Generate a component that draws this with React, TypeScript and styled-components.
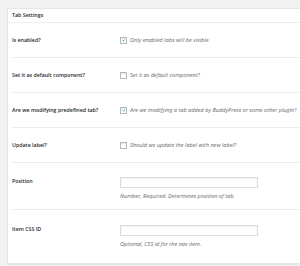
import styled, { createGlobalStyle } from "styled-components";

const GlobalStyle = createGlobalStyle`
  html, body {
    margin: 0;
    padding: 0;
    background: #f1f1f1;
    overflow: hidden;
    font-family: "Open Sans", "Liberation Sans", sans-serif;
  }
`;

const Page = styled.div`
  padding: 8px 0 0 7px;
  height: 266px;
  box-sizing: border-box;
`;

const Panel = styled.section`
  width: 320px;
  height: 256px;
  background: #fff;
  border: 1px solid #e5e5e5;
  border-right: none;
  box-sizing: border-box;
  box-shadow: 0 1px 1px rgba(0, 0, 0, 0.04);
`;

const PanelTitle = styled.h2`
  margin: 0;
  height: 14px;
  padding: 0 4px;
  border-bottom: 1px solid #eee;
  font-size: 5.3px;
  font-weight: 600;
  color: #23282d;
  line-height: 13px;
  box-sizing: border-box;
`;

const Rows = styled.div`
  padding: 0 4px;
`;

const Row = styled.div<{ $top?: number; $bottom?: number }>`
  display: grid;
  grid-template-columns: 108px 1fr;
  align-items: start;
  padding: ${(p) => p.$top ?? 13}px 0 ${(p) => p.$bottom ?? 13}px;
  border-bottom: 1px solid #eee;

  &:last-child {
    border-bottom: none;
  }
`;

const Label = styled.div`
  font-size: 5.3px;
  font-weight: 600;
  color: #23282d;
  line-height: 8px;
`;

const Field = styled.div`
  display: flex;
  flex-direction: column;
  gap: 5px;
`;

const CheckLine = styled.label`
  display: flex;
  align-items: center;
  gap: 3px;
  height: 8px;
`;

const Box = styled.span`
  width: 7px;
  height: 7px;
  border: 1px solid #b4b9be;
  background: #fff;
  box-sizing: border-box;
  display: flex;
  align-items: center;
  justify-content: center;
  box-shadow: inset 0 1px 1px rgba(0, 0, 0, 0.1);
`;

const Help = styled.span`
  font-size: 5.6px;
  font-style: italic;
  color: #666;
  line-height: 6px;
`;

const TextInput = styled.input`
  width: 138px;
  height: 11px;
  margin: 0;
  padding: 0;
  border: 1px solid #ddd;
  box-sizing: border-box;
  box-shadow: inset 0 1px 2px rgba(0, 0, 0, 0.07);
  background: #fff;
`;

function Checkbox({ checked }: { checked: boolean }) {
  return (
    <Box>
      {checked && (
        <svg width="7" height="7" viewBox="0 0 20 20">
          <path d="M14.83 4.89l1.34.94-5.81 8.38H9.02L5.78 9.67l1.34-1.25 2.57 2.4z" fill="#1e8cbe" />
        </svg>
      )}
    </Box>
  );
}

const checkRows = [
  { label: "Is enabled?", help: "Only enabled tabs will be visible.", checked: true },
  { label: "Set it as default component?", help: "Set it as default component?", checked: false },
  {
    label: "Are we modifying predefined tab?",
    help: "Are we modifying a tab added by BuddyPress or some other plugin?",
    checked: true,
  },
  { label: "Update label?", help: "Should we update the label with new label?", checked: false },
];

const textRows = [
  { label: "Position", help: "Number, Required. Determines position of tab.", top: 14 },
  { label: "Item CSS ID", help: "Optional, CSS id for the nav item.", top: 15 },
];

export default function App() {
  return (
    <Page>
      <GlobalStyle />
      <Panel>
        <PanelTitle>Tab Settings</PanelTitle>
        <Rows>
          {checkRows.map((r) => (
            <Row key={r.label}>
              <Label>{r.label}</Label>
              <CheckLine>
                <Checkbox checked={r.checked} />
                <Help>{r.help}</Help>
              </CheckLine>
            </Row>
          ))}
          {textRows.map((r) => (
            <Row key={r.label} $top={r.top} $bottom={10}>
              <Label>{r.label}</Label>
              <Field>
                <TextInput type="text" />
                <Help>{r.help}</Help>
              </Field>
            </Row>
          ))}
        </Rows>
      </Panel>
    </Page>
  );
}
